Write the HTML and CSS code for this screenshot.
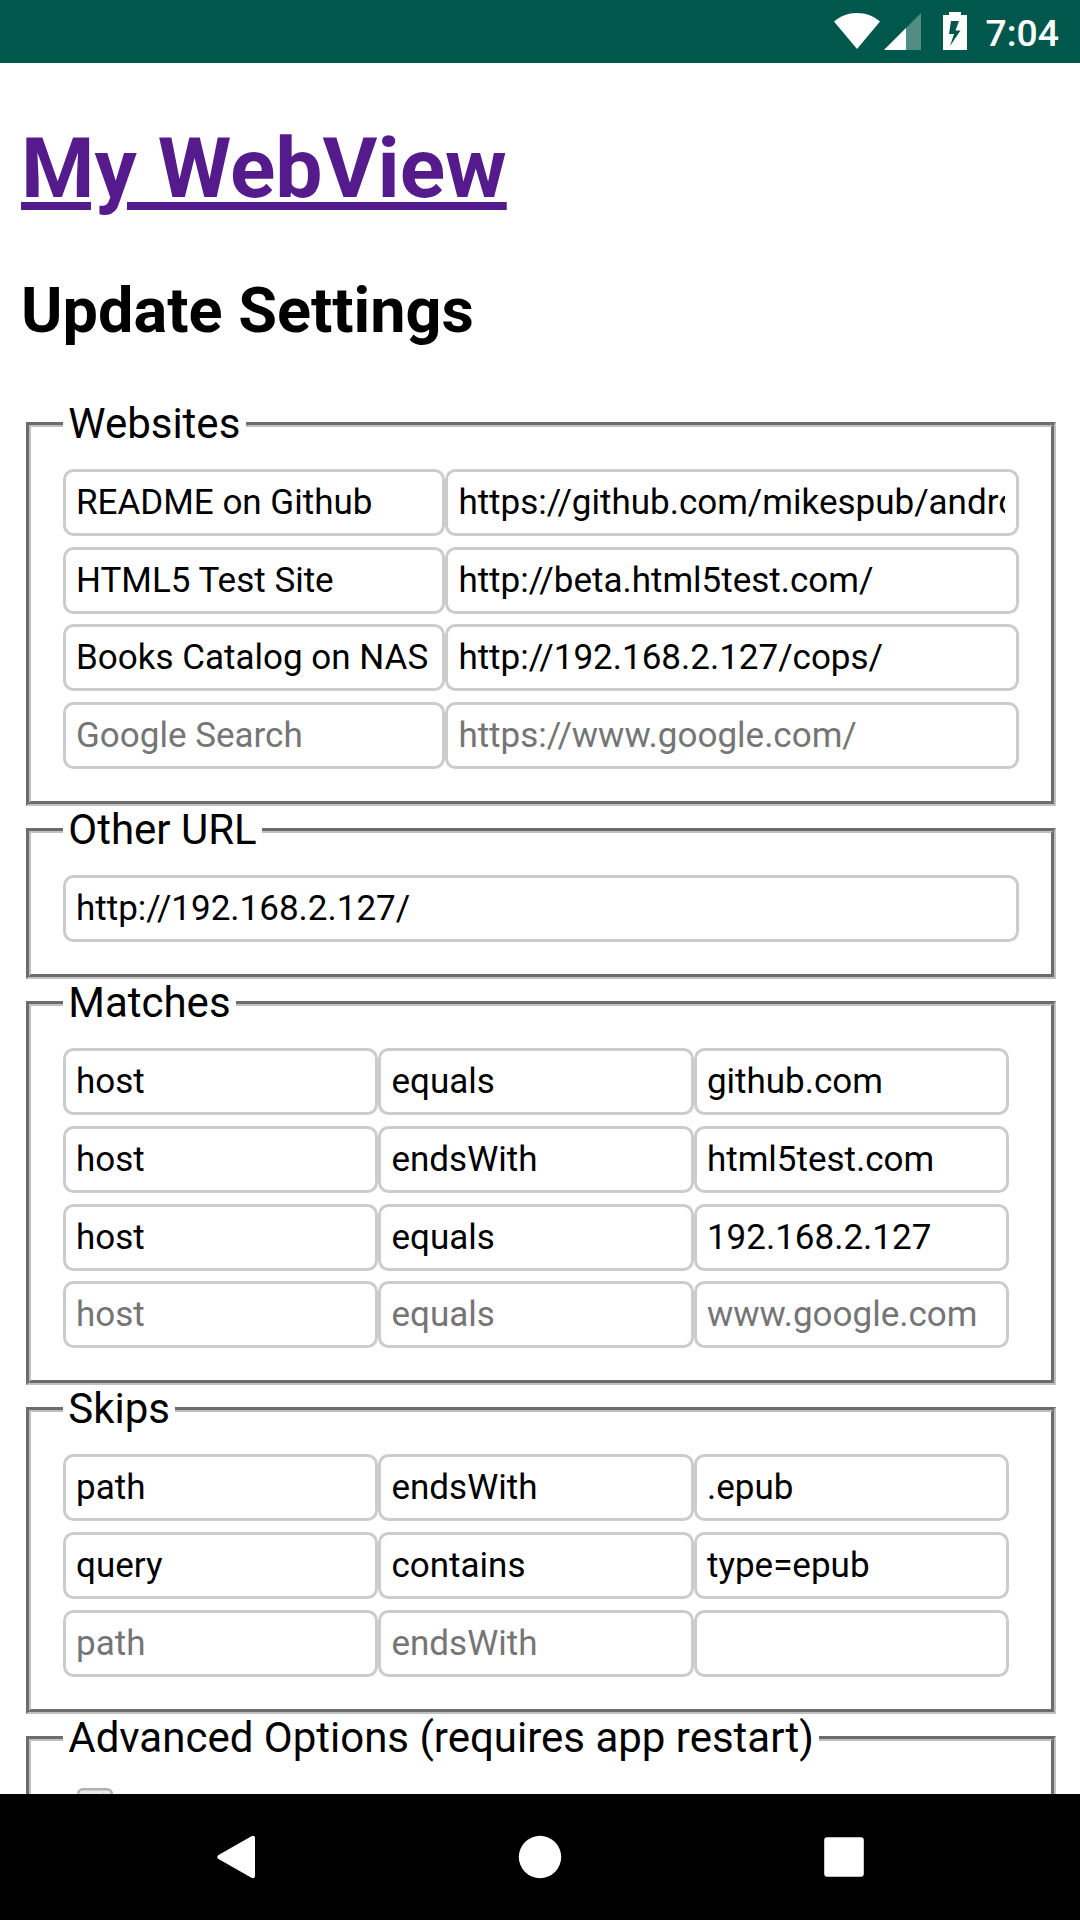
FILE: index.html
```html
<!DOCTYPE html>
<html lang="en">
<head>
<meta charset="utf-8">
<title>My WebView</title>
<link rel="stylesheet" href="styles.css">
</head>
<body>
<header class="status-bar">
  <svg class="icon-wifi" width="46" height="36" viewBox="0 0 46 36"><path d="M0 8.500C6 3.300 14 0 23 0s17 3.300 23 8.500L23 36z"/></svg>
  <svg class="icon-signal" width="37" height="37" viewBox="0 0 37 37"><path opacity=".32" d="M0 37L37 0v37z"/><path d="M0 37L22 15v22z"/></svg>
  <svg class="icon-battery" width="24" height="38" viewBox="0 0 24 38"><path fill-rule="evenodd" d="M0 3h6V0h12v3h6v35H0zM8 9L6 22H11L7 34 17.500 18.500H12.500L16 9z"/></svg>
  <span class="clock">7:04</span>
</header>
<main class="page">
  <h1 class="title"><a class="title-link" href="#">My WebView</a></h1>
  <h2 class="subtitle">Update Settings</h2>
  <form>
    <fieldset class="group">
      <legend class="group-name">Websites</legend>
      <div class="row site"><input class="field" value="README on Github"><input class="field" value="https://github.com/mikespub/android-webview"></div>
      <div class="row site"><input class="field" value="HTML5 Test Site"><input class="field" value="http://beta.html5test.com/"></div>
      <div class="row site"><input class="field" value="Books Catalog on NAS"><input class="field" value="http://192.168.2.127/cops/"></div>
      <div class="row site"><input class="field" placeholder="Google Search"><input class="field" placeholder="https://www.google.com/"></div>
    </fieldset>
    <fieldset class="group">
      <legend class="group-name">Other URL</legend>
      <div class="row single"><input class="field" value="http://192.168.2.127/"></div>
    </fieldset>
    <fieldset class="group">
      <legend class="group-name">Matches</legend>
      <div class="row rule"><input class="field" value="host"><input class="field" value="equals"><input class="field" value="github.com"></div>
      <div class="row rule"><input class="field" value="host"><input class="field" value="endsWith"><input class="field" value="html5test.com"></div>
      <div class="row rule"><input class="field" value="host"><input class="field" value="equals"><input class="field" value="192.168.2.127"></div>
      <div class="row rule"><input class="field" placeholder="host"><input class="field" placeholder="equals"><input class="field" placeholder="www.google.com"></div>
    </fieldset>
    <fieldset class="group">
      <legend class="group-name">Skips</legend>
      <div class="row rule"><input class="field" value="path"><input class="field" value="endsWith"><input class="field" value=".epub"></div>
      <div class="row rule"><input class="field" value="query"><input class="field" value="contains"><input class="field" value="type=epub"></div>
      <div class="row rule"><input class="field" placeholder="path"><input class="field" placeholder="endsWith"><input class="field"></div>
    </fieldset>
    <fieldset class="group">
      <legend class="group-name">Advanced Options (requires app restart)</legend>
      <svg class="check" width="36" height="36" viewBox="0 0 36 36"><rect class="check-box" x="1.250" y="1.250" width="33.500" height="33.500" rx="4.500"/><path class="check-mark" d="M8 18l7 8L27 6"/></svg>
    </fieldset>
  </form>
</main>
<nav class="nav-bar">
  <svg width="44" height="44" viewBox="0 0 44 44"><path d="M4.500 20L37 1.500Q41 -.3 41 3v38q0 3.300-4 1.500L4.500 24q-2.500-2 0-4z"/></svg>
  <svg width="44" height="44" viewBox="0 0 44 44"><circle cx="22" cy="22" r="21.200"/></svg>
  <svg width="44" height="44" viewBox="0 0 44 44"><rect x="2.200" y="2.200" width="39.600" height="39.600" rx="3"/></svg>
</nav>
</body>
</html>
```
FILE: styles.css
```css
* {
  box-sizing: border-box;
}

body {
  margin: 0;
  height: 1920px;
  display: flex;
  flex-direction: column;
  overflow: hidden;
  background: #fff;
  color: #000;
  font: 42px/49.22px Roboto, sans-serif;
}

.status-bar {
  flex: none;
  height: 63px;
  padding: 0 21px 0 0;
  display: flex;
  justify-content: flex-end;
  align-items: flex-start;
  background: #00574b;
  color: #fff;
  fill: #fff;
}

.icon-wifi {
  margin: 13px 4px 0 0;
}

.icon-signal {
  margin: 13px 22px 0 0;
}

.icon-battery {
  margin: 12px 19px 0 0;
}

.clock {
  padding-top: 12px;
  font-size: 37.3px;
  font-weight: 500;
  line-height: 43px;
}

.page {
  flex: 1;
  min-height: 0;
  overflow: hidden;
  padding: 0 18.75px 0 21px;
}

.title {
  margin: 57.2px 0 55.36px;
  font-size: 84px;
  line-height: 98.4px;
}

.title-link {
  color: #551a8b;
  text-decoration: underline 8px;
  text-underline-offset: 5px;
}

.subtitle {
  margin: 0 0 52.01px;
  font-size: 63px;
  line-height: 73.8px;
}

.group {
  margin: 0 5.25px;
  padding: 14.7px 32.25px 26.6px 31.5px;
  border: 5px groove #c0c0c0;
}

.group-name {
  padding: 0 5.5px 1.5px;
  line-height: 47.72px;
}

.row {
  display: grid;
  padding: 5.25px 0;
}

.site {
  grid-template-columns: 40% 60%;
}

.single {
  grid-template-columns: 100%;
}

.rule {
  grid-template-columns: repeat(3, 33%);
}

.field {
  width: 100%;
  min-width: 0;
  height: 67.17px;
  padding: 0 10.25px;
  border: 3px solid #ccc;
  border-radius: 10.5px;
  background: #fff;
  color: #000;
  font: 35px Roboto, sans-serif;
}

.field::placeholder {
  color: #757575;
}

.check {
  display: block;
  margin: 10px 0 0 14px;
}

.check-box {
  fill: #e8e8e8;
  stroke: #b0b0b0;
  stroke-width: 2.5px;
}

.check-mark {
  fill: none;
  stroke: #666;
  stroke-width: 2px;
}

.nav-bar {
  flex: none;
  height: 126px;
  padding: 0 214px;
  display: flex;
  align-items: center;
  justify-content: space-between;
  background: #000;
  fill: #fff;
}
```
